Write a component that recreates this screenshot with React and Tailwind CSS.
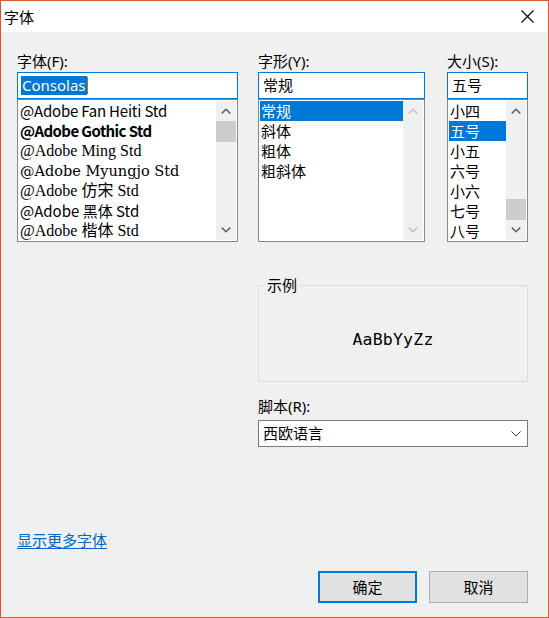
import React from 'react';
import clsx from 'clsx';

const fontRows = [
  { name: '@Adobe Fan Heiti Std', cls: "font-['Noto_Sans_CJK_SC',sans-serif] tracking-[-0.2px]" },
  { name: '@Adobe Gothic Std', cls: "font-['Noto_Sans_CJK_KR',sans-serif] font-bold tracking-[-0.6px]" },
  { name: '@Adobe Ming Std', cls: "font-['Liberation_Serif','Noto_Sans_CJK_TC',serif] text-[16px]" },
  { name: '@Adobe Myungjo Std', cls: "font-['DejaVu_Serif','Noto_Sans_CJK_KR',serif] text-[14.5px]" },
  { name: '@Adobe 仿宋 Std', cls: "font-['Liberation_Serif','Noto_Sans_CJK_SC',serif] text-[16px]" },
  { name: '@Adobe 黑体 Std', cls: "font-['Noto_Sans_CJK_SC',sans-serif]" },
  { name: '@Adobe 楷体 Std', cls: "font-['Liberation_Serif','Noto_Sans_CJK_SC',serif] text-[16px]" },
];

const styleRows = ['常规', '斜体', '粗体', '粗斜体'];
const sizeRows = ['小四', '五号', '小五', '六号', '小六', '七号', '八号'];

const Chevron = ({ up, color }) => (
  <svg width="10" height="6" viewBox="0 0 10 6" fill="none">
    <polyline
      points={up ? '0.8,5.4 5,1.2 9.2,5.4' : '0.8,0.6 5,4.8 9.2,0.6'}
      stroke={color}
      strokeWidth="1.5"
    />
  </svg>
);

const ScrollBar = ({ thumb, disabled }) => {
  const color = disabled ? '#c2c2c2' : '#606060';
  return (
    <div className="w-[20px] shrink-0 bg-[#f0f0f0] flex flex-col">
      <div className="h-[20px] flex items-center justify-center">
        <Chevron up color={color} />
      </div>
      <div className={clsx('flex-1 flex flex-col', thumb === 'end' ? 'justify-end' : 'justify-start')}>
        {thumb && <div className="h-[21px] bg-[#cdcdcd]" />}
      </div>
      <div className="h-[20px] flex items-center justify-center">
        <Chevron color={color} />
      </div>
    </div>
  );
};

const ListBox = ({ children, thumb, disabled }) => (
  <div className="h-[143px] border border-[#828790] bg-white p-[1px] flex overflow-hidden">
    <div className="flex-1 min-w-0 flex flex-col overflow-hidden">{children}</div>
    <ScrollBar thumb={thumb} disabled={disabled} />
  </div>
);

const Row = ({ selected, className, children }) => (
  <div
    className={clsx(
      'h-[20px] shrink-0 pl-[1px] leading-[20px] whitespace-nowrap',
      selected ? 'bg-[#0078d7] text-white' : 'text-black',
      className
    )}
  >
    {children}
  </div>
);

const Field = ({ children }) => (
  <div className="mt-[1px] h-[27px] border border-[#0078d7] bg-white pl-[3px] flex items-center">
    {children}
  </div>
);

const Label = ({ children }) => <div className="h-[20px] leading-[20px] text-black">{children}</div>;

export default function App() {
  return (
    <div className="w-[549px] h-[618px] border border-[#e0582a] bg-[#f0f0f0] flex flex-col text-[15px] font-['Noto_Sans','Noto_Sans_CJK_SC',sans-serif] text-black overflow-hidden">
      {/* title bar */}
      <div className="h-[31px] shrink-0 bg-white flex items-center justify-between pl-[3px] pr-[14px]">
        <span className="font-['Noto_Sans_CJK_SC',sans-serif] leading-[20px]">字体</span>
        <svg width="13" height="13" viewBox="0 0 13 13">
          <path d="M0.5 0.5 L12.5 12.5 M12.5 0.5 L0.5 12.5" stroke="#000" strokeWidth="1.1" />
        </svg>
      </div>

      <div className="flex-1 flex flex-col pl-[16px] pr-[20px]">
        {/* font / style / size pickers */}
        <div className="mt-[19px] flex">
          <div className="w-[221px] flex flex-col">
            <Label>字体(F):</Label>
            <Field>
              <span className="h-[19px] leading-[19px] px-[1px] bg-[#0078d7] text-white">Consolas</span>
              <span className="w-[1px] h-[17px] bg-[#d8602c]" />
            </Field>
            <ListBox thumb="start">
              {fontRows.map((f) => (
                <Row key={f.name} className={f.cls}>
                  {f.name}
                </Row>
              ))}
            </ListBox>
          </div>

          <div className="ml-[20px] w-[167px] flex flex-col">
            <Label>字形(Y):</Label>
            <Field>
              <span className="pl-[1px]">常规</span>
            </Field>
            <ListBox disabled>
              {styleRows.map((s, i) => (
                <Row key={s} selected={i === 0}>
                  {s}
                </Row>
              ))}
            </ListBox>
          </div>

          <div className="ml-[22px] w-[81px] flex flex-col">
            <Label>大小(S):</Label>
            <Field>
              <span className="pl-[1px]">五号</span>
            </Field>
            <ListBox thumb="end">
              {sizeRows.map((s, i) => (
                <Row key={s} selected={i === 1}>
                  {s}
                </Row>
              ))}
            </ListBox>
          </div>
        </div>

        {/* sample + script */}
        <div className="ml-[241px] w-[270px] flex flex-col">
          <div className="relative mt-[43px] h-[97px] border border-[#dcdcdc] pt-[14px] flex items-center justify-center">
            <span className="absolute -top-[11px] left-[6px] px-[2px] bg-[#f0f0f0] leading-[20px]">示例</span>
            <span className="font-['DejaVu_Sans_Mono',monospace] text-[16.5px] tracking-[0.2px]">AaBbYyZz</span>
          </div>

          <div className="mt-[14px]">
            <Label>脚本(R):</Label>
          </div>
          <div className="mt-[4px] h-[27px] border border-[#7a7a7a] bg-white pl-[4px] pr-[6px] flex items-center justify-between">
            <span>西欧语言</span>
            <svg width="10" height="6" viewBox="0 0 10 6" fill="none">
              <polyline points="0.5,0.5 5,5 9.5,0.5" stroke="#404040" strokeWidth="1" />
            </svg>
          </div>
        </div>

        <div className="mt-[83px] h-[20px] leading-[20px]">
          <a href="#" className="text-[#0066cc] underline underline-offset-2">
            显示更多字体
          </a>
        </div>

        {/* dialog buttons */}
        <div className="mt-[21px] flex justify-end gap-[12px]">
          <button className="w-[99px] h-[32px] border-2 border-[#0078d7] bg-[#e1e1e1] text-black">确定</button>
          <button className="w-[99px] h-[32px] border border-[#adadad] bg-[#e1e1e1] text-black">取消</button>
        </div>
      </div>
    </div>
  );
}
